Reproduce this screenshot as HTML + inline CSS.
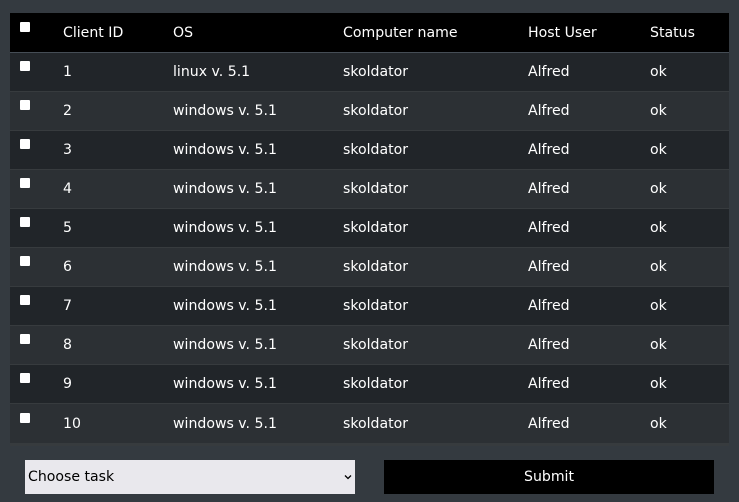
<!DOCTYPE html>
<html><head><meta charset="utf-8"><style>
html,body{margin:0;padding:0;width:739px;height:502px;background:#343a40;overflow:hidden;font-family:"DejaVu Sans","Liberation Sans",sans-serif;font-size:14.1px;color:#fff}
table{position:absolute;left:10px;top:13px;width:719px;border-collapse:collapse;table-layout:fixed}
td,th{padding:0;height:38px;border-top:1px solid #373b3e;font-weight:normal;text-align:left;vertical-align:middle}
thead th{background:#000;border-top:none;border-bottom:1px solid #454d55;height:38px;padding-top:1px}
tbody tr:nth-child(odd){background:#212529}
tbody tr:nth-child(even){background:#2c3034}
tbody tr:last-child td{border-bottom:3px solid #373b3e;height:39px}
.cb{display:inline-block;width:10px;height:10px;background:#fff;border-radius:1px;margin-left:10px;position:relative;top:-5px}
.sel{position:absolute;left:25px;top:460px;width:330px;height:34px;background:#e9e8ed;color:#000;box-sizing:border-box;padding-left:3px;line-height:34px}
.sel svg{position:absolute;right:3px;top:14px}
.btn{position:absolute;left:384px;top:460px;width:330px;height:34px;background:#000;text-align:center;line-height:34px}
</style></head><body>
<table>
<colgroup><col style="width:53px"><col style="width:110px"><col style="width:170px"><col style="width:185px"><col style="width:122px"><col></colgroup>
<thead><tr><th><span class="cb"></span></th><th>Client ID</th><th>OS</th><th>Computer name</th><th>Host User</th><th>Status</th></tr></thead>
<tbody>
<tr><td><span class="cb"></span></td><td>1</td><td>linux v. 5.1</td><td>skoldator</td><td>Alfred</td><td>ok</td></tr>
<tr><td><span class="cb"></span></td><td>2</td><td>windows v. 5.1</td><td>skoldator</td><td>Alfred</td><td>ok</td></tr>
<tr><td><span class="cb"></span></td><td>3</td><td>windows v. 5.1</td><td>skoldator</td><td>Alfred</td><td>ok</td></tr>
<tr><td><span class="cb"></span></td><td>4</td><td>windows v. 5.1</td><td>skoldator</td><td>Alfred</td><td>ok</td></tr>
<tr><td><span class="cb"></span></td><td>5</td><td>windows v. 5.1</td><td>skoldator</td><td>Alfred</td><td>ok</td></tr>
<tr><td><span class="cb"></span></td><td>6</td><td>windows v. 5.1</td><td>skoldator</td><td>Alfred</td><td>ok</td></tr>
<tr><td><span class="cb"></span></td><td>7</td><td>windows v. 5.1</td><td>skoldator</td><td>Alfred</td><td>ok</td></tr>
<tr><td><span class="cb"></span></td><td>8</td><td>windows v. 5.1</td><td>skoldator</td><td>Alfred</td><td>ok</td></tr>
<tr><td><span class="cb"></span></td><td>9</td><td>windows v. 5.1</td><td>skoldator</td><td>Alfred</td><td>ok</td></tr>
<tr><td><span class="cb"></span></td><td>10</td><td>windows v. 5.1</td><td>skoldator</td><td>Alfred</td><td>ok</td></tr>
</tbody></table>
<div class="sel">Choose task<svg width="8" height="6" viewBox="0 0 8 6"><path d="M1 1.5L4 4.5L7 1.5" stroke="#000" stroke-width="1.3" fill="none"/></svg></div>
<div class="btn">Submit</div>
</body></html>
